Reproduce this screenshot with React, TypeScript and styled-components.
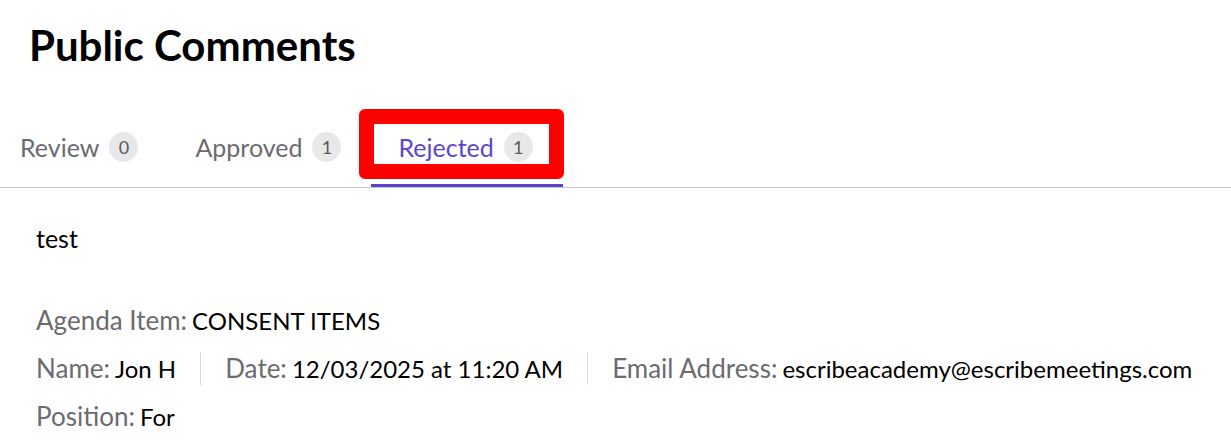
import React from "react";
import styled, { createGlobalStyle } from "styled-components";

const Global = createGlobalStyle`
  html, body { margin: 0; padding: 0; background: #fff; }
  body { font-family: Lato, "Noto Sans", sans-serif; color: #000; }
`;

const Page = styled.div`
  width: 1231px;
  height: 444px;
  overflow: hidden;
  position: relative;
`;

const Title = styled.h1`
  margin: 0;
  padding: 20px 0 0 29px;
  font-size: 42px;
  font-weight: 700;
  line-height: 50px;
  color: #000;
`;

const TabList = styled.div`
  display: flex;
  margin-top: 39px;
  border-bottom: 1px solid #c8c8c8;
`;

const Tab = styled.div<{ $active?: boolean }>`
  display: flex;
  align-items: center;
  gap: 10px;
  padding: 0 30px 0 27px;
  height: 78px;
  font-size: 25px;
  white-space: nowrap;
  color: ${(p) => (p.$active ? "#5a45d0" : "#6b6b70")};
  border-bottom: 3px solid ${(p) => (p.$active ? "#5a45d0" : "transparent")};
  box-sizing: border-box;
  &:first-child { padding-left: 20px; }
`;

const Badge = styled.span`
  display: inline-flex;
  align-items: center;
  justify-content: center;
  width: 29px;
  height: 30px;
  border-radius: 50%;
  background: #e8e8ea;
  color: #5a5a5e;
  font-size: 18px;
`;

const Highlight = styled.div`
  position: absolute;
  left: 359px;
  top: 109px;
  width: 205px;
  height: 70px;
  box-sizing: border-box;
  border: 15px solid #ff0000;
  border-radius: 6px;
  pointer-events: none;
`;

const Body = styled.div`
  padding: 35px 0 0 36px;
`;

const CommentText = styled.p`
  margin: 0 0 43px;
  font-size: 25px;
  line-height: 30px;
`;

const MetaRow = styled.div`
  display: flex;
  align-items: center;
  height: 48px;
`;

const Field = styled.div<{ $divider?: boolean }>`
  display: flex;
  align-items: baseline;
  flex-shrink: 0;
  white-space: nowrap;
  gap: 5px;
  padding-right: 24px;
  margin-right: 24px;
  border-right: 1px solid ${(p) => (p.$divider ? "#dcdcdc" : "transparent")};
  line-height: 33px;
  &:last-child { border-right: none; }
`;

const Label = styled.span`
  font-size: 26px;
  color: #6b6b70;
`;

const Value = styled.span`
  font-size: 24px;
  color: #000;
`;

export default function App() {
  return (
    <Page>
      <Global />
      <Title>Public Comments</Title>
      <TabList>
        <Tab>
          Review <Badge>0</Badge>
        </Tab>
        <Tab>
          Approved <Badge>1</Badge>
        </Tab>
        <Tab $active>
          Rejected <Badge>1</Badge>
        </Tab>
      </TabList>
      <Highlight />
      <Body>
        <CommentText>test</CommentText>
        <MetaRow>
          <Field>
            <Label>Agenda Item:</Label>
            <Value>CONSENT ITEMS</Value>
          </Field>
        </MetaRow>
        <MetaRow>
          <Field $divider>
            <Label>Name:</Label>
            <Value>Jon H</Value>
          </Field>
          <Field $divider>
            <Label>Date:</Label>
            <Value>12/03/2025 at 11:20 AM</Value>
          </Field>
          <Field>
            <Label>Email Address:</Label>
            <Value>escribeacademy@escribemeetings.com</Value>
          </Field>
        </MetaRow>
        <MetaRow>
          <Field>
            <Label>Position:</Label>
            <Value>For</Value>
          </Field>
        </MetaRow>
      </Body>
    </Page>
  );
}
